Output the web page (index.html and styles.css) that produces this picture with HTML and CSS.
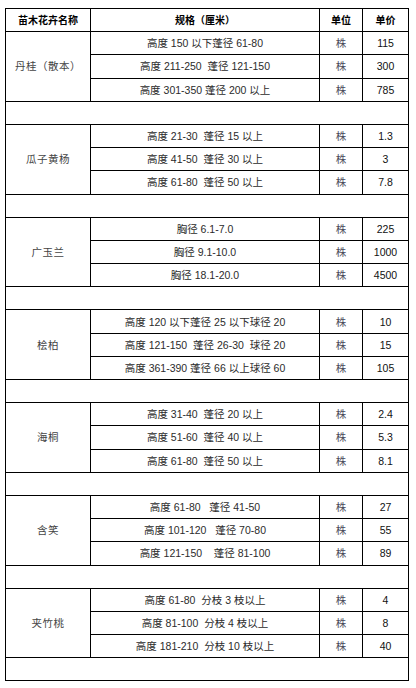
FILE: index.html
```html
<!DOCTYPE html>
<html lang="zh-CN">
<head>
<meta charset="utf-8">
<title>苗木花卉价格表</title>
<link rel="stylesheet" href="styles.css">
</head>
<body>
<div class="page">
<table class="price">
  <colgroup>
    <col class="c-name"><col class="c-spec"><col class="c-unit"><col class="c-price">
  </colgroup>
  <thead>
    <tr><th>苗木花卉名称</th><th>规格（厘米）</th><th>单位</th><th>单价</th></tr>
  </thead>
  <tbody>
    <tr><td rowspan="3" class="name">丹桂（散本）</td><td>高度 150 以下蓬径 61-80</td><td class="unit">株</td><td class="num">115</td></tr>
    <tr><td>高度 211-250&nbsp; 蓬径 121-150</td><td class="unit">株</td><td class="num">300</td></tr>
    <tr><td>高度 301-350 蓬径 200 以上</td><td class="unit">株</td><td class="num">785</td></tr>
    <tr class="gap"><td colspan="4"></td></tr>

    <tr><td rowspan="3" class="name">瓜子黄杨</td><td>高度 21-30&nbsp; 蓬径 15 以上</td><td class="unit">株</td><td class="num">1.3</td></tr>
    <tr><td>高度 41-50&nbsp; 蓬径 30 以上</td><td class="unit">株</td><td class="num">3</td></tr>
    <tr><td>高度 61-80&nbsp; 蓬径 50 以上</td><td class="unit">株</td><td class="num">7.8</td></tr>
    <tr class="gap"><td colspan="4"></td></tr>

    <tr><td rowspan="3" class="name">广玉兰</td><td>胸径 6.1-7.0</td><td class="unit">株</td><td class="num">225</td></tr>
    <tr><td>胸径 9.1-10.0</td><td class="unit">株</td><td class="num">1000</td></tr>
    <tr><td>胸径 18.1-20.0</td><td class="unit">株</td><td class="num">4500</td></tr>
    <tr class="gap"><td colspan="4"></td></tr>

    <tr><td rowspan="3" class="name">桧柏</td><td>高度 120 以下蓬径 25 以下球径 20</td><td class="unit">株</td><td class="num">10</td></tr>
    <tr><td>高度 121-150&nbsp; 蓬径 26-30&nbsp; 球径 20</td><td class="unit">株</td><td class="num">15</td></tr>
    <tr><td>高度 361-390 蓬径 66 以上球径 60</td><td class="unit">株</td><td class="num">105</td></tr>
    <tr class="gap"><td colspan="4"></td></tr>

    <tr><td rowspan="3" class="name">海桐</td><td>高度 31-40&nbsp; 蓬径 20 以上</td><td class="unit">株</td><td class="num">2.4</td></tr>
    <tr><td>高度 51-60&nbsp; 蓬径 40 以上</td><td class="unit">株</td><td class="num">5.3</td></tr>
    <tr><td>高度 61-80&nbsp; 蓬径 50 以上</td><td class="unit">株</td><td class="num">8.1</td></tr>
    <tr class="gap"><td colspan="4"></td></tr>

    <tr><td rowspan="3" class="name">含笑</td><td>高度 61-80&nbsp;&nbsp; 蓬径 41-50</td><td class="unit">株</td><td class="num">27</td></tr>
    <tr><td>高度 101-120&nbsp;&nbsp; 蓬径 70-80</td><td class="unit">株</td><td class="num">55</td></tr>
    <tr><td>高度 121-150&nbsp;&nbsp;&nbsp; 蓬径 81-100</td><td class="unit">株</td><td class="num">89</td></tr>
    <tr class="gap"><td colspan="4"></td></tr>

    <tr><td rowspan="3" class="name">夹竹桃</td><td>高度 61-80&nbsp; 分枝 3 枝以上</td><td class="unit">株</td><td class="num">4</td></tr>
    <tr><td>高度 81-100&nbsp; 分枝 4 枝以上</td><td class="unit">株</td><td class="num">8</td></tr>
    <tr><td>高度 181-210&nbsp; 分枝 10 枝以上</td><td class="unit">株</td><td class="num">40</td></tr>
    <tr class="gap"><td colspan="4"></td></tr>
  </tbody>
</table>
</div>
</body>
</html>
```

FILE: styles.css
```css
html, body {
  margin: 0;
  padding: 0;
  background: #ffffff;
}

.page {
  padding: 8px 0 0 5px;
}

.price {
  border-collapse: collapse;
  table-layout: fixed;
  width: 403px;
  font-family: "Liberation Sans", "Noto Sans CJK SC", sans-serif;
  font-size: 10.5px;
  color: #2b2b2b;
}

.c-name { width: 85px; }
.c-spec { width: 229px; }
.c-unit { width: 43px; }
.c-price { width: 46px; }

.price tr {
  height: 23.2px;
}

.price th,
.price td {
  border: 1px solid #000;
  padding: 0;
  text-align: center;
  vertical-align: middle;
  line-height: 12px;
  white-space: nowrap;
}

.price th {
  font-family: "Noto Sans CJK SC", sans-serif;
  font-weight: 700;
  font-size: 10px;
  color: #000;
}

.price td.name {
  color: #444;
  letter-spacing: 0.5px;
}

.price td.unit {
  color: #4a4a5a;
}

.price td.num {
  color: #111;
}

.price tr.gap td {
  border-left: 1px solid #000;
  border-right: 1px solid #000;
}
```
